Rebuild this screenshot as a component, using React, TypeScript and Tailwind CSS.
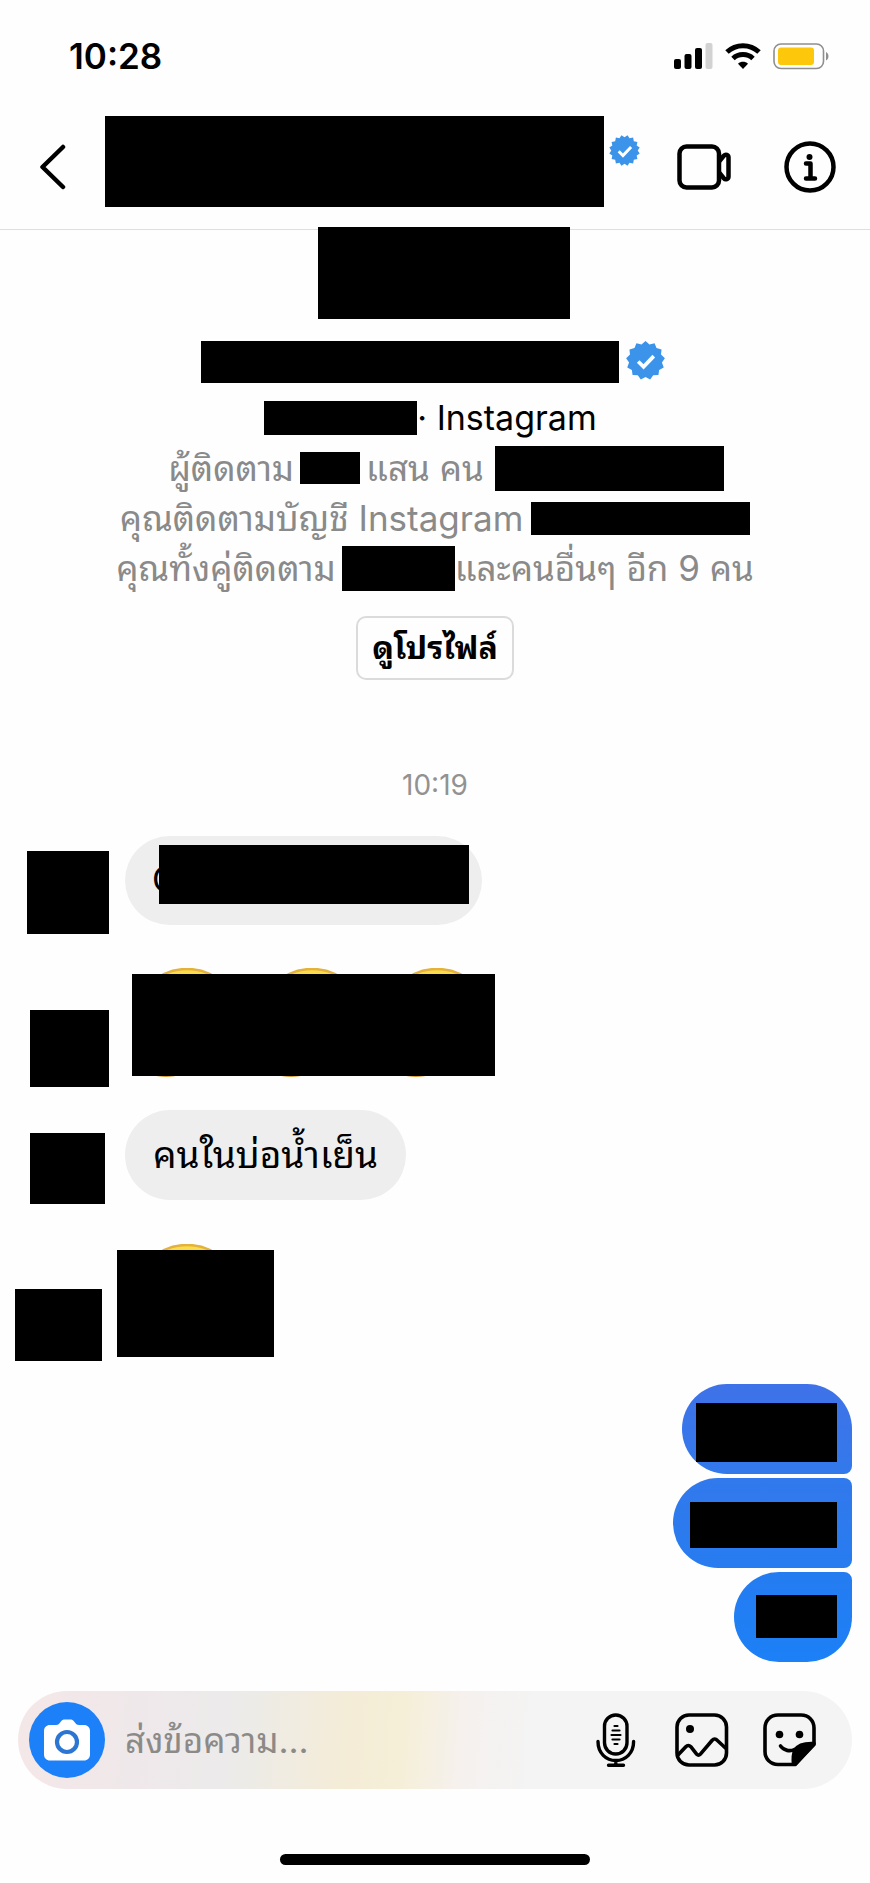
import type { ReactNode } from 'react';
import { clsx } from 'clsx';

/** Solid block that hides private content. */
function Redacted({ className }: { className?: string }) {
  return <div className={clsx('bg-black shrink-0', className)} />;
}

function VerifiedBadge({ points, className }: { points: number; className?: string }) {
  const outline = Array.from({ length: points * 2 }, (_, i) => {
    const radius = i % 2 === 0 ? 20 : 17;
    const angle = (Math.PI * i) / points - Math.PI / 2 + (points % 2 === 0 ? Math.PI / points : 0);
    return `${20 + radius * Math.cos(angle)},${20 + radius * Math.sin(angle)}`;
  }).join(' ');

  return (
    <svg viewBox="0 0 40 40" className={clsx('shrink-0', className)} aria-label="Verified">
      <polygon points={outline} fill="#3b93ea" />
      <path d="M12.500 21l5.500 5.500L28.500 15.500" fill="none" stroke="#fff" strokeWidth="3.800" />
    </svg>
  );
}

function StatusBar() {
  return (
    <div className="flex h-[112px] items-center justify-between pl-[69px] pr-[40px]">
      <span className="text-[35px] leading-[40px] font-semibold">10:28</span>
      <div className="flex items-center gap-3">
        <svg width="39" height="26" viewBox="0 0 39 26">
          <rect x="0" y="16" width="7" height="10" rx="2" />
          <rect x="10.500" y="11" width="7" height="15" rx="2" />
          <rect x="21" y="5" width="7" height="21" rx="2" />
          <rect x="31.500" y="0" width="7" height="26" rx="2" fill="#d2d2d2" />
        </svg>
        <svg width="36" height="28" viewBox="0 0 36 28">
          <g fill="none" stroke="#000" strokeWidth="5">
            <path d="M2 10C11 1.500 25 1.500 34 10" />
            <path d="M8 16.500c5.500-5.200 14.500-5.200 20 0" />
          </g>
          <path d="M18 27l-5-5.200c2.800-2.600 7.200-2.600 10 0z" />
        </svg>
        <svg width="57" height="28" viewBox="0 0 57 28">
          <rect x="1" y="2" width="49.500" height="24.500" rx="7" fill="none" stroke="#8e8e8e" strokeWidth="1.600" />
          <rect x="5" y="5.500" width="36" height="17.500" rx="3" fill="#fdc70b" />
          <path d="M53 10c3.300 1.500 3.300 7 0 8.500z" fill="#8e8e8e" />
        </svg>
      </div>
    </div>
  );
}

function ChatHeader() {
  return (
    <header className="flex h-[118px] items-start border-b border-[#dedede] pt-1 pl-[39px] pr-[34px]">
      <button type="button" aria-label="Back" className="flex h-[102px] w-[66px] items-center">
        <svg width="27" height="46" viewBox="0 0 27 46" fill="none" stroke="#000" strokeWidth="4.500" strokeLinecap="round" strokeLinejoin="round">
          <path d="M24 3L3.500 23 24 43" />
        </svg>
      </button>
      <Redacted className="h-[91px] flex-1" />
      <VerifiedBadge points={16} className="mt-[19px] ml-[5px] size-[31px]" />
      <div className="ml-[37px] flex h-[102px] items-center gap-[53px]">
        <button type="button" aria-label="Video call">
          <svg width="54" height="46" viewBox="0 0 54 46" fill="none" stroke="#000" strokeWidth="4.500" strokeLinejoin="round">
            <rect x="2.500" y="2.500" width="39.500" height="41" rx="7" />
            <path d="M42.500 17l4.300-5.200c1.800-2 4.700-1 4.700 1.700v19c0 2.700-2.900 3.700-4.700 1.700L42.500 29" />
          </svg>
        </button>
        <button type="button" aria-label="Info">
          <svg width="52" height="52" viewBox="0 0 52 52" fill="none" stroke="#000" strokeWidth="4.500">
            <circle cx="26" cy="26" r="23.500" />
            <circle cx="25.500" cy="16" r="3" fill="#000" stroke="none" />
            <path d="M22 22.500h4.500v15M22 37.500h9" strokeWidth="4.500" strokeLinecap="round" strokeLinejoin="round" />
          </svg>
        </button>
      </div>
    </header>
  );
}

function ProfileIntro() {
  return (
    <section className="-mt-[3px] flex flex-col items-center text-[35px] leading-[48px] whitespace-nowrap text-[#8a8a8a]">
      <Redacted className="ml-[18px] h-[92px] w-[252px]" />
      <div className="mt-[22px] mr-1 flex gap-[7px]">
        <Redacted className="h-[42px] w-[418px]" />
        <VerifiedBadge points={13} className="size-[39px]" />
      </div>
      <div className="mt-[11px] mr-[9px] flex h-[48px] items-center text-[34px] text-black">
        <Redacted className="h-[34px] w-[153px]" />
        <span>· Instagram</span>
      </div>
      <div className="mt-[2px] ml-[22px] flex h-[48px] items-center">
        <span>ผู้ติดตาม</span>
        <Redacted className="mr-[6px] ml-[6px] h-[32px] w-[60px]" />
        <span>แสน คน</span>
        <Redacted className="ml-[11px] h-[45px] w-[229px]" />
      </div>
      <div className="mt-[2px] flex h-[48px] items-center">
        <span>คุณติดตามบัญชี Instagram</span>
        <Redacted className="ml-2 h-[33px] w-[219px]" />
      </div>
      <div className="mt-[2px] flex h-[48px] items-center">
        <span>คุณทั้งคู่ติดตาม</span>
        <Redacted className="ml-[6px] h-[45px] w-[113px]" />
        <span>และคนอื่นๆ อีก 9 คน</span>
      </div>
      <button
        type="button"
        className="mt-[24px] h-[64px] w-[158px] rounded-[10px] border-2 border-[#dbdbdb] text-[32px] leading-[48px] font-bold text-black"
      >
        ดูโปรไฟล์
      </button>
    </section>
  );
}

function Emoji() {
  return (
    <svg width="125" height="110" viewBox="0 0 125 110">
      <circle cx="62" cy="53.500" r="52.500" fill="#fadb4a" stroke="#e3b13c" strokeWidth="2.500" />
      <ellipse cx="41" cy="100" rx="22" ry="9" fill="#d99a35" />
    </svg>
  );
}

function EmojiMessage({ count, className }: { count: number; className: string }) {
  return (
    <div className="relative flex h-[109px]">
      {Array.from({ length: count }, (_, i) => (
        <Emoji key={i} />
      ))}
      <Redacted className={clsx('absolute', className)} />
    </div>
  );
}

function ReceivedRow({ avatar, className, children }: { avatar: string; className: string; children: ReactNode }) {
  return (
    <li className={clsx('flex items-start', className)}>
      <div className="w-[125px] shrink-0">
        <Redacted className={avatar} />
      </div>
      {children}
    </li>
  );
}

const SENT = [
  {
    bubble: 'w-[170px] rounded-[45px] rounded-br-[8px] from-[#3f72e8] to-[#3279ec] pt-[19px]',
    text: 'h-[59px] w-[141px]',
  },
  {
    bubble: 'w-[179px] rounded-l-[45px] rounded-r-[8px] from-[#3179ec] to-[#277cf0] pt-[24px]',
    text: 'h-[46px] w-[147px]',
  },
  {
    bubble: 'w-[118px] rounded-[45px] rounded-tr-[8px] from-[#257cf1] to-[#1c80f6] pt-[23px]',
    text: 'h-[43px] w-[81px]',
  },
];

function Messages() {
  return (
    <main>
      <time className="mt-[87px] block text-center text-[28px] leading-[36px] text-[#929292]">10:19</time>
      <ul className="mt-[33px] flex flex-col">
        <ReceivedRow avatar="mt-[15px] ml-[27px] h-[83px] w-[82px]" className="h-[132px]">
          <div className="relative h-[89px] w-[357px] rounded-full bg-[#eee] pt-[23px] pl-[27px] text-[35px] leading-[40px]">
            C
            <Redacted className="absolute top-[9px] left-[34px] h-[59px] w-[310px]" />
          </div>
        </ReceivedRow>
        <ReceivedRow avatar="mt-[42px] ml-[30px] h-[77px] w-[79px]" className="h-[142px]">
          <EmojiMessage count={3} className="top-[6px] left-[7px] h-[102px] w-[363px]" />
        </ReceivedRow>
        <ReceivedRow avatar="mt-[23px] ml-[30px] h-[71px] w-[75px]" className="h-[134px]">
          <div className="flex h-[90px] items-center rounded-full bg-[#eee] px-7 text-[37px] leading-[48px]">
            คนในบ่อน้ำเย็น
          </div>
        </ReceivedRow>
        <ReceivedRow avatar="mt-[45px] ml-[15px] h-[72px] w-[87px]" className="h-[140px]">
          <EmojiMessage count={1} className="top-[6px] -left-2 h-[107px] w-[157px]" />
        </ReceivedRow>
      </ul>
      <ul className="flex flex-col items-end gap-1 pr-[18px]">
        {SENT.map((msg) => (
          <li key={msg.bubble} className={clsx('flex h-[90px] items-start justify-end bg-linear-to-b pr-[15px]', msg.bubble)}>
            <Redacted className={msg.text} />
          </li>
        ))}
      </ul>
    </main>
  );
}

function Composer() {
  return (
    <form className="mx-[18px] mt-[29px] flex h-[98px] items-center rounded-full bg-[linear-gradient(95deg,#f5e7e7_0%,#efe8ea_14%,#ecebea_26%,#f4ecd6_40%,#f5efd8_46%,#f5f1ef_54%,#f4f4f4_62%)] pr-[35px] pl-[11px]">
      <button type="button" aria-label="Camera" className="flex size-[76px] shrink-0 items-center justify-center rounded-full bg-[#1c80f8]">
        <svg width="46" height="42" viewBox="0 0 46 42">
          <path
            d="M6 6h6c2.500 0 3-1 4.500-3C18 1 19 .5 21 .5h5c2 0 3 .5 4.500 2.500 1.500 2 2 3 4.500 3h5c3.500 0 6 2.500 6 6v23.500c0 3.500-2.500 6-6 6H6c-3.500 0-6-2.500-6-6V12c0-3.500 2.500-6 6-6z"
            fill="#fff"
          />
          <circle cx="23" cy="23" r="10" fill="none" stroke="#2b76d2" strokeWidth="4.200" />
        </svg>
      </button>
      <input
        type="text"
        aria-label="ข้อความ"
        placeholder="ส่งข้อความ..."
        className="h-[60px] min-w-0 flex-1 pl-[20px] text-[35px] leading-[48px] outline-none placeholder:text-[#8c8a88]"
      />
      <div className="flex items-center gap-[34px]">
        <button type="button" aria-label="Voice message">
          <svg width="45" height="54" viewBox="0 0 45 54" fill="none" stroke="#000" strokeWidth="3.400" strokeLinecap="round">
            <rect x="8.500" y="2" width="22.500" height="39" rx="11.200" />
            <path d="M2 28.500c0 11.500 8 19 17.800 19s17.800-7.500 17.800-19M19.800 48v4M12.500 52.200h15" />
            <path d="M18.500 13h3M16.500 17.500h7M15.500 22h9M16.500 26.500h7M18.500 31h3" strokeWidth="2.200" />
          </svg>
        </button>
        <button type="button" aria-label="Photo">
          <svg width="54" height="54" viewBox="0 0 54 54" fill="none" stroke="#000" strokeWidth="3.600" strokeLinejoin="round">
            <rect x="2" y="2" width="49.500" height="50" rx="12" />
            <circle cx="15" cy="16" r="4" fill="#000" stroke="none" />
            <path d="M3 42l7.800-8.300c1.600-1.700 3.400-1.700 5 0l6 7.600c1.200 1.200 2.200 1.200 3.400 0L37 27.500c1.800-2 3.600-2 5.400 0L51 35.500" />
          </svg>
        </button>
        <button type="button" aria-label="Sticker">
          <svg width="54" height="54" viewBox="0 0 54 54" fill="none" stroke="#000" strokeWidth="3.600" strokeLinecap="round" strokeLinejoin="round">
            <path d="M32 51.500H15C7.500 51.500 2 46 2 38.500V15C2 7.500 7.500 2 15 2h23c7.500 0 13 5.500 13 13v16.500z" />
            <path d="M17.500 33c3.500 4.700 9.500 5.800 14 3.500" />
            <path d="M30.500 51c-.5-6-.5-10 1.500-14 3-5 9-7 19-6.500L32.500 51z" fill="#000" />
            <circle cx="16.500" cy="21.500" r="3.800" fill="#000" stroke="none" />
            <circle cx="36.500" cy="21.500" r="3.800" fill="#000" stroke="none" />
          </svg>
        </button>
      </div>
    </form>
  );
}

export default function App() {
  return (
    <div className="min-h-screen bg-[#fefefe] pb-[18px] font-[Inter,Thonburi,'Noto_Sans_Thai_Looped',Loma,Waree,Garuda,'Noto_Sans_Thai',sans-serif] text-black">
      <StatusBar />
      <ChatHeader />
      <ProfileIntro />
      <Messages />
      <Composer />
      <div className="mx-auto mt-[65px] h-[11px] w-[310px] rounded-full bg-black" />
    </div>
  );
}
